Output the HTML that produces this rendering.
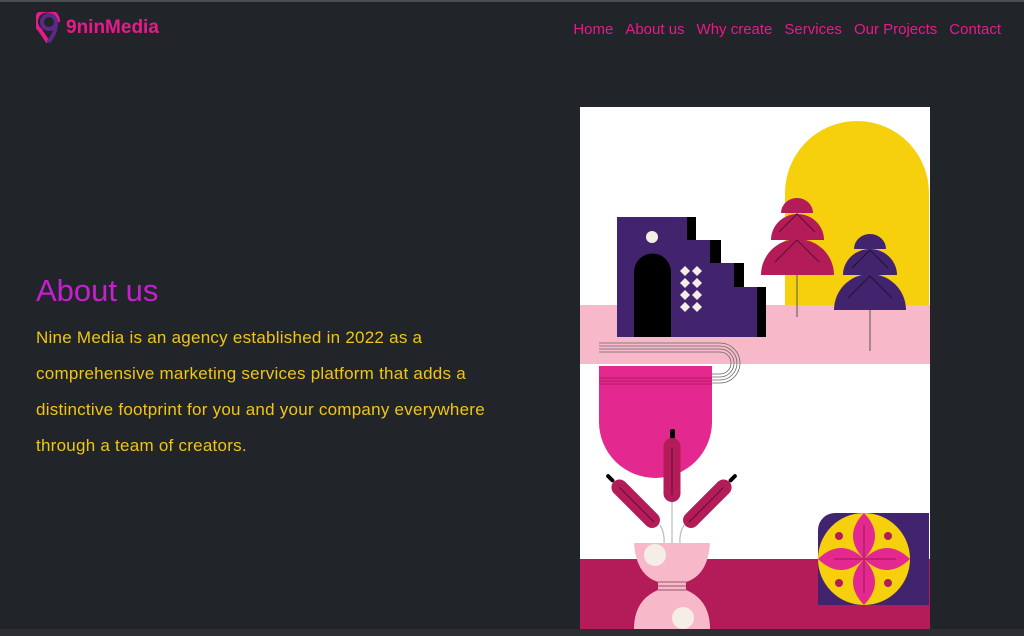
<!DOCTYPE html>
<html><head><meta charset="utf-8"><style>
html,body{margin:0;padding:0}
body{width:1024px;height:636px;background:#212529;position:relative;overflow:hidden;font-family:"Liberation Sans","DejaVu Sans",sans-serif}
.topline{position:absolute;left:0;top:0;width:1024px;height:2px;background:#4a4d52}
.bot{position:absolute;left:0;top:629px;width:1024px;height:7px;background:#2c2e31}
.logo{position:absolute;left:36px;top:12px;display:flex;align-items:center}
.logo span{color:#e8198b;font-weight:bold;font-size:19px;margin-left:2px}
nav{position:absolute;right:23px;top:21px;font-size:15px;color:#e8198b;white-space:nowrap}
nav a{margin-left:12px}
h1{position:absolute;left:36px;top:273px;margin:0;font-weight:normal;font-size:31px;color:#c61fd0}
p{position:absolute;left:36px;top:320px;margin:0;width:520px;font-size:17px;line-height:36px;color:#f0c419;letter-spacing:0.25px;white-space:nowrap}
svg.art{position:absolute;left:580px;top:107px}
</style></head><body>
<div class="topline"></div>
<div class="logo">
<svg width="28" height="32" viewBox="0 0 28 32"><path d="M12 30 L4 18 A11 11 0 1 1 22 10" fill="none" stroke="#e8198b" stroke-width="4"/><circle cx="13" cy="10" r="7" fill="none" stroke="#5b2a86" stroke-width="4"/><path d="M20 10 Q20 22 12 30" fill="none" stroke="#5b2a86" stroke-width="4"/></svg>
<span>9ninMedia</span></div>
<nav><a>Home</a><a>About us</a><a>Why create</a><a>Services</a><a>Our Projects</a><a>Contact</a></nav>
<h1>About us</h1>
<p>Nine Media is an agency established in 2022 as a<br>comprehensive marketing services platform that adds a<br>distinctive footprint for you and your company everywhere<br>through a team of creators.</p>
<svg class="art" width="350" height="522" viewBox="580 107 350 522">
<rect x="580" y="107" width="350" height="522" fill="#fff"/>
<path d="M785 306 V193 A72 72 0 0 1 929 193 V306 Z" fill="#f6d00c"/>
<rect x="580" y="305" width="350" height="59" fill="#f7b9c9"/>
<path d="M617 217 H696 V240 H721 V263 H744 V287 H766 V337 H617 Z" fill="#000"/>
<path d="M617 217 H687 V240 H710 V263 H734 V287 H757 V337 H617 Z" fill="#42246e"/>
<circle cx="652" cy="237" r="6" fill="#f5eee6"/>
<path d="M634 337 V272 A18.5 18.5 0 0 1 671 272 V337 Z" fill="#000"/>
<g fill="#f5eee6">
<path d="M685 266 l5 5 -5 5 -5 -5z"/><path d="M697 266 l5 5 -5 5 -5 -5z"/>
<path d="M685 278 l5 5 -5 5 -5 -5z"/><path d="M697 278 l5 5 -5 5 -5 -5z"/>
<path d="M685 290 l5 5 -5 5 -5 -5z"/><path d="M697 290 l5 5 -5 5 -5 -5z"/>
<path d="M685 302 l5 5 -5 5 -5 -5z"/><path d="M697 302 l5 5 -5 5 -5 -5z"/>
</g>
<line x1="797" y1="200" x2="797" y2="317" stroke="#555" stroke-width="1"/>
<path d="M761 275 A36.5 36 0 0 1 834 275 Z" fill="#b31c58"/>
<path d="M771 240 A26.5 26 0 0 1 824 240 Z" fill="#b31c58"/>
<path d="M781 213 A16 15 0 0 1 813 213 Z" fill="#b31c58"/>
<path d="M775 262 L797 240 L819 262 M779 232 L797 214 L815 232" fill="none" stroke="#5a1030" stroke-width="1"/>
<line x1="870" y1="236" x2="870" y2="351" stroke="#555" stroke-width="1"/>
<path d="M834 310 A36 36 0 0 1 906 310 Z" fill="#42246e"/>
<path d="M843 275 A27 26 0 0 1 897 275 Z" fill="#42246e"/>
<path d="M854 249 A16 15 0 0 1 886 249 Z" fill="#42246e"/>
<path d="M848 298 L870 276 L892 298 M852 268 L870 250 L888 268" fill="none" stroke="#20103a" stroke-width="1"/>
<g fill="none" stroke="#666" stroke-width="0.8">
<path d="M599 343 H720 A20 20 0 0 1 720 383 H712"/>
<path d="M599 346 H720 A17 17 0 0 1 720 380 H712"/>
<path d="M599 349 H720 A14 14 0 0 1 720 377 H712"/>
<path d="M599 352 H720 A11 11 0 0 1 720 374 H712"/>
</g>
<path d="M599 366 H712 V422 A56.5 56 0 0 1 599 422 Z" fill="#e3288f"/>
<g stroke="#a3164f" stroke-width="0.8"><line x1="599" y1="378" x2="712" y2="378"/><line x1="599" y1="381" x2="712" y2="381"/><line x1="599" y1="384" x2="712" y2="384"/></g>
<rect x="580" y="559" width="350" height="70" fill="#b31c58"/>
<g fill="none" stroke="#bbb" stroke-width="1.2"><line x1="672" y1="500" x2="672" y2="544"/><path d="M660 525 Q665 533 664 544"/><path d="M684 525 Q679 533 680 544"/></g>
<rect x="670" y="429" width="5" height="10" rx="2" fill="#000"/>
<rect x="663.5" y="438" width="17" height="64" rx="8.5" fill="#b31c58"/>
<line x1="672" y1="448" x2="672" y2="495" stroke="#5a1030"/>
<g transform="rotate(-45 635 503)"><rect x="627" y="473" width="16" height="62" rx="8" fill="#b31c58"/><line x1="635" y1="481" x2="635" y2="530" stroke="#5a1030"/><rect x="633" y="463" width="4" height="10" rx="2" fill="#000"/></g>
<g transform="rotate(45 708 503)"><rect x="700" y="473" width="16" height="62" rx="8" fill="#b31c58"/><line x1="708" y1="481" x2="708" y2="530" stroke="#5a1030"/><rect x="706" y="463" width="4" height="10" rx="2" fill="#000"/></g>
<path d="M634 543 H710 Q708 575 686 582 V590 Q710 600 710 629 H634 Q634 600 658 590 V582 Q636 575 634 543 Z" fill="#f7b9c9"/>
<circle cx="655" cy="555" r="11" fill="#f5eee6"/>
<circle cx="683" cy="618" r="11" fill="#f5eee6"/>
<g stroke="#7a3050" stroke-width="0.7"><line x1="658" y1="582" x2="686" y2="582"/><line x1="658" y1="586" x2="686" y2="586"/><line x1="658" y1="590" x2="686" y2="590"/></g>
<path d="M818 605 V530 A17 17 0 0 1 835 513 H929 V605 Z" fill="#42246e"/>
<circle cx="864" cy="559" r="46" fill="#f6d00c"/>
<g fill="#e3288f"><path d="M864 513 Q886 536 864 559 Q842 536 864 513Z"/><path d="M864 605 Q886 582 864 559 Q842 582 864 605Z"/><path d="M818 559 Q841 537 864 559 Q841 581 818 559Z"/><path d="M910 559 Q887 537 864 559 Q887 581 910 559Z"/></g>
<g stroke="#9a1a55" stroke-width="1"><line x1="864" y1="525" x2="864" y2="593"/><line x1="834" y1="559" x2="896" y2="559"/></g>
<g fill="#b31c58"><circle cx="839" cy="536" r="4"/><circle cx="888" cy="536" r="4"/><circle cx="839" cy="583" r="4"/><circle cx="888" cy="583" r="4"/></g>
</svg>
<div class="bot"></div>
</body></html>
